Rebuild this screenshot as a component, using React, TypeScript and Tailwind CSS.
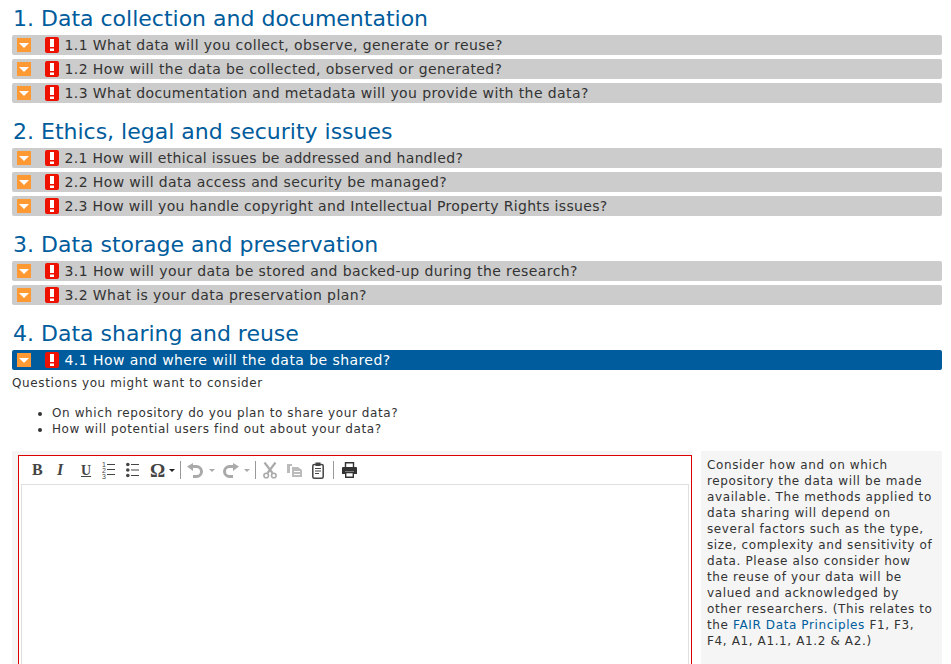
import React from "react";

const sections = [
  { title: "1. Data collection and documentation", h: "h-[35px]", items: [
    { t: "1.1 What data will you collect, observe, generate or reuse?", k: "tracking-[0.41px]" },
    { t: "1.2 How will the data be collected, observed or generated?", k: "tracking-[0.4px]" },
    { t: "1.3 What documentation and metadata will you provide with the data?", k: "tracking-[0.41px]" },
  ] },
  { title: "2. Ethics, legal and security issues", h: "h-[45px]", items: [
    { t: "2.1 How will ethical issues be addressed and handled?", k: "tracking-[0.31px]" },
    { t: "2.2 How will data access and security be managed?", k: "tracking-[0.39px]" },
    { t: "2.3 How will you handle copyright and Intellectual Property Rights issues?", k: "tracking-[0.33px]" },
  ] },
  { title: "3. Data storage and preservation", h: "h-[45px]", items: [
    { t: "3.1 How will your data be stored and backed-up during the research?", k: "tracking-[0.42px]" },
    { t: "3.2 What is your data preservation plan?", k: "tracking-[0.41px]" },
  ] },
  { title: "4. Data sharing and reuse", h: "h-[45px]", items: [
    { t: "4.1 How and where will the data be shared?", k: "tracking-[0.43px]" },
  ], active: true },
];

function Row({ text, spacing, active }: { text: string; spacing: string; active?: boolean }) {
  return (
    <div className={`flex h-5 items-center rounded-[2px] ${active ? "bg-[#005c9c] text-white" : "bg-[#cccccc] text-[#333333]"}`}>
      <span className="ml-[5px] flex h-[14px] w-[14px] items-center justify-center bg-[#ff9933]">
        <span className="h-0 w-0 border-x-[5px] border-t-[5px] border-x-transparent border-t-white" />
      </span>
      <span className="ml-[14px] flex h-[16px] w-[14px] items-center justify-center rounded-[2px] bg-[#ee1100]">
        <svg width="4" height="12" viewBox="0 0 4 12"><rect x="0" y="0" width="4" height="8" fill="#fff" /><rect x="0" y="9.5" width="4" height="2.5" fill="#fff" /></svg>
      </span>
      <span className={`ml-[5.5px] text-[14px] leading-5 whitespace-nowrap ${spacing}`}>{text}</span>
    </div>
  );
}

function Sep({ className }: { className: string }) {
  return <span className={`h-[18px] w-px bg-[#999999] ${className}`} />;
}

function Caret({ light, className }: { light?: boolean; className: string }) {
  return <span className={`h-0 w-0 border-x-[3px] border-t-[3px] border-x-transparent ${light ? "border-t-[#aaaaaa]" : "border-t-[#222222]"} ${className}`} />;
}

function ListIcon({ ol }: { ol?: boolean }) {
  return (
    <svg width="13" height="18" viewBox="0 0 13 18" className="shrink-0">
      {ol ? (
        <>
          <text x="0" y="6" fontSize="7" fill="#444" fontFamily="Liberation Sans">1</text>
          <text x="0" y="12" fontSize="7" fill="#444" fontFamily="Liberation Sans">2</text>
          <text x="0" y="18" fontSize="7" fill="#444" fontFamily="Liberation Sans">3</text>
          <rect x="5" y="3" width="8" height="1" fill="#444" />
          <rect x="5" y="8" width="8" height="1" fill="#444" />
          <rect x="5" y="13" width="8" height="1" fill="#444" />
        </>
      ) : (
        <>
          <circle cx="1.8" cy="3.5" r="1.8" fill="#444" />
          <circle cx="1.8" cy="9" r="1.8" fill="#444" />
          <circle cx="1.8" cy="14.5" r="1.8" fill="#444" />
          <rect x="5" y="3" width="8" height="1" fill="#444" />
          <rect x="5" y="8.5" width="8" height="1" fill="#444" />
          <rect x="5" y="14" width="8" height="1" fill="#444" />
        </>
      )}
    </svg>
  );
}

function Undo({ flip, className }: { flip?: boolean; className: string }) {
  return (
    <svg width="17" height="15" viewBox="0 0 17 15" className={`shrink-0 ${flip ? "-scale-x-100" : ""} ${className}`}>
      <path d="M5 3.5 H9.5 A5 5 0 0 1 9.5 13.5 H6" fill="none" stroke="#aaaaaa" strokeWidth="3" />
      <path d="M0 3.5 L6 0 V8 Z" fill="#aaaaaa" />
    </svg>
  );
}

export default function App() {
  return (
    <div className="h-[664px] w-[951px] overflow-hidden bg-white pr-[9px] pl-[12px] font-['DejaVu_Sans','Verdana',sans-serif] text-[#333333]">
      {sections.map((s) => (
        <section key={s.title}>
          <h2 className={`flex items-end ${s.h} pb-[3px] pl-[1px] text-[22px] leading-[26px] text-[#005c9c]`}>{s.title}</h2>
          <div className="flex flex-col gap-1">
            {s.items.map((i) => <Row key={i.t} text={i.t} spacing={i.k} active={s.active} />)}
          </div>
        </section>
      ))}
      <p className="mt-[5px] text-[12px] leading-4 tracking-[0.62px]">Questions you might want to consider</p>
      <ul className="mt-[14px] ml-[40px] list-disc text-[12px] leading-4 tracking-[0.6px]">
        <li>On which repository do you plan to share your data?</li>
        <li>How will potential users find out about your data?</li>
      </ul>
      <div className="mt-[14px] flex">
        <div className="w-[680px] bg-[#f5f5f5] pt-1 pl-[6px]">
          <div className="h-[300px] w-[674px] border border-[#dd0000] bg-white px-[2px] pt-[2px]">
            <div className="flex h-[26px] items-center pb-[2px] text-[#444444]">
              <span className="ml-[11px] w-[24px] font-['Liberation_Serif',serif] text-[16px] font-bold">B</span>
              <span className="w-[25px] pl-[1px] font-['Liberation_Serif',serif] text-[16px] font-bold italic">I</span>
              <span className="w-[21px] font-['Liberation_Serif',serif] text-[14px] font-bold underline">U</span>
              <span className="flex w-[24px]"><ListIcon ol /></span>
              <span className="flex w-[24px]"><ListIcon /></span>
              <span className="w-[19px] font-['Liberation_Serif',serif] text-[19px] leading-none font-bold">Ω</span>
              <Caret className="" />
              <Sep className="ml-[5px]" />
              <Undo className="ml-[6px]" />
              <Caret light className="ml-[5px]" />
              <Undo flip className="ml-[7px]" />
              <Caret light className="ml-[5px]" />
              <Sep className="ml-[5px]" />
              <svg width="14" height="17" viewBox="0 0 14 17" className="ml-[7px] shrink-0">
                <path d="M1.5 0.5 L9.5 11 M12.5 0.5 L4.5 11" fill="none" stroke="#aaaaaa" strokeWidth="2.2" />
                <circle cx="3.2" cy="13.5" r="2.3" fill="none" stroke="#aaaaaa" strokeWidth="1.6" />
                <circle cx="10.8" cy="13.5" r="2.3" fill="none" stroke="#aaaaaa" strokeWidth="1.6" />
              </svg>
              <svg width="15" height="13" viewBox="0 0 15 13" className="ml-[10px] shrink-0">
                <path d="M0 0h5v2H3v7H0z" fill="#bbbbbb" />
                <path d="M5 3h6l4 3v7H5z" fill="#bbbbbb" />
                <path d="M7 7h6v1H7zM7 10h6v1H7z" fill="#fff" />
              </svg>
              <svg width="12" height="17" viewBox="0 0 12 17" className="ml-[10px] shrink-0">
                <rect x="0.8" y="2.5" width="10.4" height="13.7" rx="1.5" fill="none" stroke="#444" strokeWidth="1.5" />
                <rect x="3.5" y="0.5" width="5" height="3.5" fill="#444" />
                <path d="M3 6h6v1H3zM3 8.5h6v1H3zM3 11h4v1H3z" fill="#444" />
              </svg>
              <Sep className="ml-[9px]" />
              <svg width="15" height="16" viewBox="0 0 15 16" className="ml-[8px] shrink-0">
                <path d="M3.5 5V0.8h8V5" fill="none" stroke="#333" strokeWidth="1.4" />
                <path d="M1 5h13a1 1 0 0 1 1 1v6h-3V9.5H3V12H0V6a1 1 0 0 1 1-1z" fill="#333" />
                <path d="M3.7 10.5h7.6v4.7H3.7z" fill="none" stroke="#333" strokeWidth="1.4" />
              </svg>
            </div>
            <div className="h-full border-x border-t border-[#e0e0e0]" />
          </div>
        </div>
        <div className="ml-[9px] w-[241px] bg-[#f5f5f5] px-[6px] pt-[6px] text-[12px] leading-4 tracking-[0.62px]">
          Consider how and on which repository the data will be made available. The methods applied to data sharing will depend on several factors such as the type, size, complexity and sensitivity of data. Please also consider how the reuse of your data will be valued and acknowledged by other researchers. (This relates to the <a className="text-[#005c9c]">FAIR Data Principles</a> F1, F3, F4, A1, A1.1, A1.2 &amp; A2.)
        </div>
      </div>
    </div>
  );
}
